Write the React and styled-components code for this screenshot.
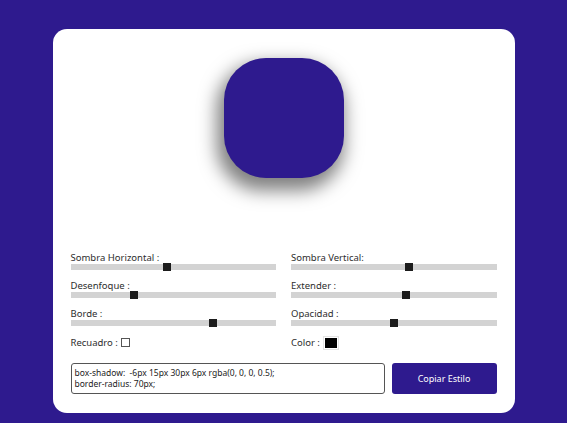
import { useState } from "react"
import styled, { createGlobalStyle } from "styled-components"

const Global = createGlobalStyle`
  body {
    margin: 0;
    background-color: #2e1a8e;
    font-family: "Noto Sans", "DejaVu Sans", sans-serif;
  }
`

function Slider({ label, min, max, step, value, onChange }) {
  return (
    <Field>
      <Label>{label}</Label>
      <Range
        type="range"
        min={min}
        max={max}
        step={step || 1}
        value={value}
        onChange={(e) => onChange(Number(e.target.value))}
      />
    </Field>
  )
}

function App() {
  const [h, setH] = useState(-6)
  const [v, setV] = useState(15)
  const [blur, setBlur] = useState(30)
  const [spread, setSpread] = useState(6)
  const [radius, setRadius] = useState(70)
  const [opacity, setOpacity] = useState(0.5)
  const [inset, setInset] = useState(false)
  const [color, setColor] = useState("#000000")

  const r = parseInt(color.slice(1, 3), 16)
  const g = parseInt(color.slice(3, 5), 16)
  const b = parseInt(color.slice(5, 7), 16)
  const shadow = `${inset ? "inset " : ""}${h}px ${v}px ${blur}px ${spread}px rgba(${r}, ${g}, ${b}, ${opacity})`
  const code = `box-shadow:  ${shadow};\nborder-radius: ${radius}px;`

  // the preview is drawn at 0.6 of the real size
  const scaled = `${inset ? "inset " : ""}${h * 0.6}px ${v * 0.6}px ${blur * 0.6}px ${spread * 0.6}px rgba(${r}, ${g}, ${b}, ${opacity})`

  return (
    <Page>
      <Global />
      <Card>
        <Preview>
          <Box style={{ boxShadow: scaled, borderRadius: radius * 0.6 }} />
        </Preview>

        <Controls>
          <Slider label="Sombra Horizontal :" min={-100} max={100} value={h} onChange={setH} />
          <Slider label="Sombra Vertical:" min={-100} max={100} value={v} onChange={setV} />
          <Slider label="Desenfoque :" min={0} max={100} value={blur} onChange={setBlur} />
          <Slider label="Extender :" min={-50} max={50} value={spread} onChange={setSpread} />
          <Slider label="Borde :" min={0} max={100} value={radius} onChange={setRadius} />
          <Slider label="Opacidad :" min={0} max={1} step={0.01} value={opacity} onChange={setOpacity} />

          <Inline>
            <Label>Recuadro :</Label>
            <Check type="checkbox" checked={inset} onChange={(e) => setInset(e.target.checked)} />
          </Inline>
          <Inline>
            <Label>Color :</Label>
            <ColorPick type="color" value={color} onChange={(e) => setColor(e.target.value)} />
          </Inline>
        </Controls>

        <Footer>
          <Code readOnly value={code} />
          <CopyButton onClick={() => navigator.clipboard && navigator.clipboard.writeText(code)}>
            Copiar Estilo
          </CopyButton>
        </Footer>
      </Card>
    </Page>
  )
}

const Page = styled.main`
  display: flex;
  justify-content: center;
  padding-top: 29px;
`

const Card = styled.section`
  width: 462px;
  box-sizing: border-box;
  padding: 29px 18px 19px;
  background-color: white;
  border-radius: 14px;
`

const Preview = styled.div`
  display: flex;
  justify-content: center;
  align-items: flex-start;
  height: 193px;
`

const Box = styled.div`
  width: 120px;
  height: 120px;
  background-color: #2e1a8e;
`

const Controls = styled.div`
  display: grid;
  grid-template-columns: 1fr 1fr;
  column-gap: 15px;
  row-gap: 9px;
`

const Field = styled.div`
  display: flex;
  flex-direction: column;
`

const Label = styled.span`
  font-size: 9.5px;
  line-height: 13px;
  color: #2d2d2d;
`

const Range = styled.input`
  -webkit-appearance: none;
  appearance: none;
  width: 100%;
  height: 6px;
  margin: 0;
  background: #d3d3d3;
  outline: none;

  &::-webkit-slider-thumb {
    -webkit-appearance: none;
    width: 8px;
    height: 8px;
    background: #1c1c1c;
    cursor: pointer;
  }
`

const Inline = styled.div`
  display: flex;
  align-items: center;
  gap: 3px;
  height: 15px;
`

const Check = styled.input`
  -webkit-appearance: none;
  appearance: none;
  width: 9px;
  height: 9px;
  margin: 0;
  border: 1px solid #555;
  background: white;

  &:checked {
    background: #2e1a8e;
  }
`

const ColorPick = styled.input`
  width: 16px;
  height: 14px;
  padding: 0;
  border: 1px solid #e4e4e4;
  background: white;
  cursor: pointer;

  &::-webkit-color-swatch-wrapper {
    padding: 1px;
  }
  &::-webkit-color-swatch {
    border: none;
  }
`

const Footer = styled.div`
  display: flex;
  gap: 7px;
  margin-top: 13px;
`

const Code = styled.textarea`
  flex: 1;
  height: 31px;
  box-sizing: border-box;
  padding: 3px 3px;
  border: 1px solid #555;
  border-radius: 3px;
  resize: none;
  font-family: inherit;
  font-size: 8.5px;
  line-height: 11px;
  color: #222;
  overflow: hidden;
`

const CopyButton = styled.button`
  width: 105px;
  height: 31px;
  border: none;
  border-radius: 3px;
  background-color: #2e1a8e;
  color: white;
  font-family: inherit;
  font-size: 9px;
  cursor: pointer;
`

export default App
